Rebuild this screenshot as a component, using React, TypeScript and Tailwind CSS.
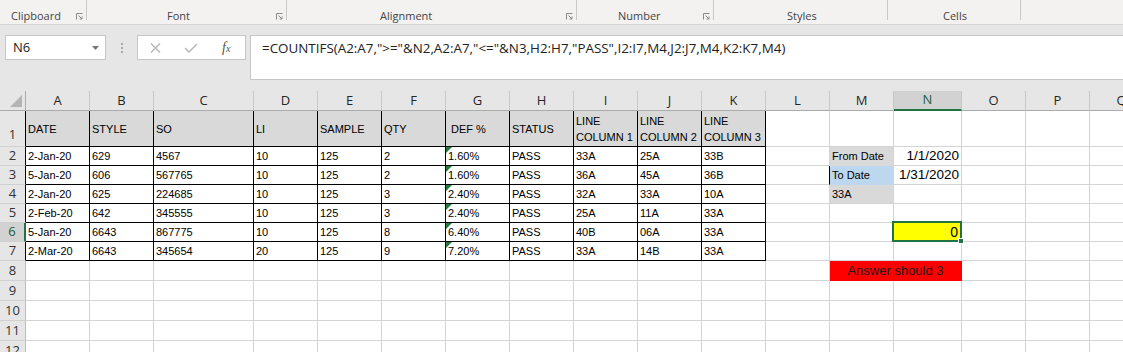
const COLS: [string, string][] = [
  ['A', 'w-[64px]'],
  ['B', 'w-[64px]'],
  ['C', 'w-[100px]'],
  ['D', 'w-[64px]'],
  ['E', 'w-[64px]'],
  ['F', 'w-[64px]'],
  ['G', 'w-[64px]'],
  ['H', 'w-[64px]'],
  ['I', 'w-[64px]'],
  ['J', 'w-[64px]'],
  ['K', 'w-[64px]'],
  ['L', 'w-[64px]'],
  ['M', 'w-[64px]'],
  ['N', 'w-[68px]'],
  ['O', 'w-[64px]'],
  ['P', 'w-[64px]'],
  ['Q', 'w-[64px]'],
]

const HEAD = ['DATE', 'STYLE', 'SO', 'LI', 'SAMPLE', 'QTY', '\u00a0DEF %', 'STATUS', 'LINE\nCOLUMN 1', 'LINE\nCOLUMN 2', 'LINE\nCOLUMN 3']

const DATA = [
  ['2-Jan-20', '629', '4567', '10', '125', '2', '1.60%', 'PASS', '33A', '25A', '33B'],
  ['5-Jan-20', '606', '567765', '10', '125', '2', '1.60%', 'PASS', '36A', '45A', '36B'],
  ['2-Jan-20', '625', '224685', '10', '125', '3', '2.40%', 'PASS', '32A', '33A', '10A'],
  ['2-Feb-20', '642', '345555', '10', '125', '3', '2.40%', 'PASS', '25A', '11A', '33A'],
  ['5-Jan-20', '6643', '867775', '10', '125', '8', '6.40%', 'PASS', '40B', '06A', '33A'],
  ['2-Mar-20', '6643', '345654', '20', '125', '9', '7.20%', 'PASS', '33A', '14B', '33A'],
]

const ROW_H: Record<number, string> = {
  1: 'h-[36px]',
  2: 'h-[19px]',
  3: 'h-[19px]',
  4: 'h-[19px]',
  5: 'h-[19px]',
  6: 'h-[19px]',
  7: 'h-[19px]',
}

const ui = "font-['Open_Sans',sans-serif]"
const arial = "font-['Liberation_Sans',Arial,sans-serif]"

function Launcher() {
  return (
    <svg width="7" height="7" viewBox="0 0 7 7" className="ml-auto mr-[3px] mt-[13px] shrink-0">
      <path d="M0.5 6.5V0.5H6.5" fill="none" stroke="#8a8a8a" />
      <path d="M2.5 2.5L6 6M6 3.5V6H3.5" fill="none" stroke="#8a8a8a" />
    </svg>
  )
}

function Group({ w, pl, label, launcher }: { w: string; pl: string; label: string; launcher?: boolean }) {
  return (
    <div className={`flex h-[20px] shrink-0 border-r border-[#c8c8c8] ${w}`}>
      <span className={`pt-[8px] text-[11px] leading-[16px] text-[#444] ${pl}`}>{label}</span>
      {launcher && <Launcher />}
    </div>
  )
}

function Ribbon() {
  return (
    <div className={`flex h-[25px] border-b border-[#d6d6d6] bg-[#f3f2f1] shadow-[0_1px_2px_rgba(0,0,0,0.1)] ${ui}`}>
      <Group w="w-[87px]" pl="pl-[11px]" label="Clipboard" launcher />
      <Group w="w-[200px]" pl="pl-[80px]" label="Font" launcher />
      <Group w="w-[290px]" pl="pl-[93px]" label="Alignment" launcher />
      <Group w="w-[137px]" pl="pl-[41px]" label="Number" launcher />
      <Group w="w-[174px]" pl="pl-[73px]" label="Styles" />
      <Group w="w-[133px]" pl="pl-[55px]" label="Cells" />
    </div>
  )
}

function FormulaBar() {
  return (
    <div className={`flex h-[66px] items-start bg-[#e6e6e6] pt-[10px] ${ui}`}>
      <div className="ml-[5px] flex h-[25px] w-[101px] items-center border border-[#c6c6c6] bg-white pl-[7px] text-[13px] text-[#222]">
        N6
        <svg width="7" height="4" viewBox="0 0 7 4" className="ml-auto mr-[6px]">
          <path d="M0 0H7L3.5 4Z" fill="#777" />
        </svg>
      </div>
      <div className="ml-[15px] mt-[8px] flex w-[3px] flex-col gap-[2px]">
        <span className="h-[2px] w-[2px] bg-[#a8a8a8]" />
        <span className="h-[2px] w-[2px] bg-[#a8a8a8]" />
        <span className="h-[2px] w-[2px] bg-[#a8a8a8]" />
      </div>
      <div className="ml-[13px] flex h-[25px] w-[109px] items-center border border-[#c6c6c6] bg-white">
        <svg width="11" height="10" viewBox="0 0 11 10" className="ml-[12px]">
          <path d="M1 0.5L10 9.5M10 0.5L1 9.5" stroke="#b5b5b5" strokeWidth="1.3" />
        </svg>
        <svg width="14" height="10" viewBox="0 0 14 10" className="ml-[23px]">
          <path d="M1 5L5 9L13 1" fill="none" stroke="#b5b5b5" strokeWidth="1.4" />
        </svg>
        <span className="ml-[24px] font-['Liberation_Serif',serif] text-[14px] italic leading-none text-[#555]">
          f<span className="text-[10px]">x</span>
        </span>
      </div>
      <div className="ml-[4px] h-[45px] flex-1 border-y border-l border-[#c6c6c6] bg-white pl-[11px] pt-[3px] text-[13.4px] leading-[18px] whitespace-nowrap text-[#222]">
        =COUNTIFS(A2:A7,"&gt;="&amp;N2,A2:A7,"&lt;="&amp;N3,H2:H7,"PASS",I2:I7,M4,J2:J7,M4,K2:K7,M4)
      </div>
    </div>
  )
}

function ColumnHeaders() {
  return (
    <div className={`flex h-[20px] bg-[#e6e6e6] ${ui}`}>
      <div className="flex h-full w-[26px] shrink-0 items-end justify-end border-r border-b border-[#ababab] pb-[3px] pr-[3px]">
        <svg width="12" height="12" viewBox="0 0 12 12">
          <path d="M12 0V12H0Z" fill="#b4b4b4" />
        </svg>
      </div>
      {COLS.map(([id, w]) => {
        const sel = id === 'N'
        return (
          <div
            key={id}
            className={`flex h-full shrink-0 items-center justify-center border-r border-r-[#c8c8c8] text-[13px] ${w} ${
              sel ? 'border-b-2 border-b-[#217346] bg-[#d2d2d2] text-[#1d5e3a]' : 'border-b border-b-[#ababab] text-[#262626]'
            }`}
          >
            {id}
          </div>
        )
      })}
    </div>
  )
}

function Tri() {
  return (
    <svg width="6" height="6" viewBox="0 0 6 6" className="absolute left-0 top-0">
      <path d="M0 0H6L0 6Z" fill="#1e7a3e" />
    </svg>
  )
}

function Row({ r }: { r: number }) {
  const h = ROW_H[r] ?? 'h-[20px]'
  const inTable = r <= 7
  const sel = r === 6
  return (
    <div className={`flex ${h}`}>
      <div
        className={`flex h-full w-[26px] shrink-0 justify-center border-b border-b-[#d0d0d0] text-[13px] ${ui} ${
          r === 1 ? 'items-end pb-[2px]' : 'items-center'
        } ${
          sel
            ? 'border-r-2 border-r-[#217346] bg-[#d2d2d2] text-[#1d5e3a]'
            : inTable
              ? 'border-r border-r-black bg-[#e6e6e6] text-[#333]'
              : 'border-r border-r-[#bdbdbd] bg-[#e6e6e6] text-[#333]'
        }`}
      >
        {r}
      </div>
      {COLS.map(([id, w], i) => {
        let text: string | undefined
        let rc = 'border-r-[#d4d4d4]'
        let bc = 'border-b-[#d4d4d4]'
        let extra = 'pl-[2px]'
        let tri = false
        let over = false

        if (i <= 10 && inTable) {
          rc = 'border-r-black'
          bc = 'border-b-black'
          if (r === 1) {
            text = HEAD[i]
            extra += ' bg-[#d9d9d9] whitespace-pre-line leading-[16px]'
          } else {
            text = DATA[r - 2][i]
            tri = id === 'G'
          }
        }
        if (id === 'L' && r === 3) rc = 'border-r-black'
        if (id === 'M' && r === 2) {
          text = 'From Date'
          bc = 'border-b-[#d9d9d9]'
          extra += ' bg-[#d9d9d9] text-[11.5px] text-[#222]'
        }
        if (id === 'M' && r === 3) {
          text = 'To Date'
          bc = 'border-b-[#bdd7ee]'
          extra += ' bg-[#bdd7ee] text-[11.5px] text-[#222]'
        }
        if (id === 'M' && r === 4) {
          text = '33A'
          extra += ' bg-[#d9d9d9] text-[#333]'
        }
        if (id === 'N' && r === 2) {
          text = '1/1/2020'
          extra = 'justify-end pr-[2px] text-[13.5px] text-[#111]'
        }
        if (id === 'N' && r === 3) {
          text = '1/31/2020'
          extra = 'justify-end pr-[2px] text-[13.5px] text-[#111]'
        }
        if (id === 'N' && r === 6) {
          text = '0'
          extra = 'justify-end pr-[3px] bg-[#ffff00] text-[14px] text-[#111]'
          over = true
        }
        if (r === 8 && id === 'N') return null
        if (r === 8 && id === 'M') {
          return (
            <div
              key={id}
              className={`flex h-full w-[132px] shrink-0 items-center justify-center border-r border-b border-[#ff0000] bg-[#ff0000] text-[13px] text-[#1a1a1a] ${arial}`}
            >
              Answer should 3
            </div>
          )
        }

        return (
          <div
            key={id}
            className={`relative flex h-full shrink-0 items-center overflow-visible border-r border-b text-[11px] text-black ${arial} ${w} ${rc} ${bc} ${extra}`}
          >
            {tri && <Tri />}
            {text}
            {over && (
              <>
                <div className="pointer-events-none absolute -left-[2px] -top-[2px] -right-[1px] -bottom-[1px] z-10 border-2 border-[#217346]" />
                <div className="absolute -right-[3px] -bottom-[3px] z-20 h-[6px] w-[6px] border border-white bg-[#217346]" />
              </>
            )}
          </div>
        )
      })}
    </div>
  )
}

export default function App() {
  const rows = [1, 2, 3, 4, 5, 6, 7, 8, 9, 10, 11, 12]
  return (
    <div className="h-[352px] w-[1123px] overflow-hidden bg-white">
      <Ribbon />
      <FormulaBar />
      <ColumnHeaders />
      {rows.map((r) => (
        <Row key={r} r={r} />
      ))}
    </div>
  )
}
